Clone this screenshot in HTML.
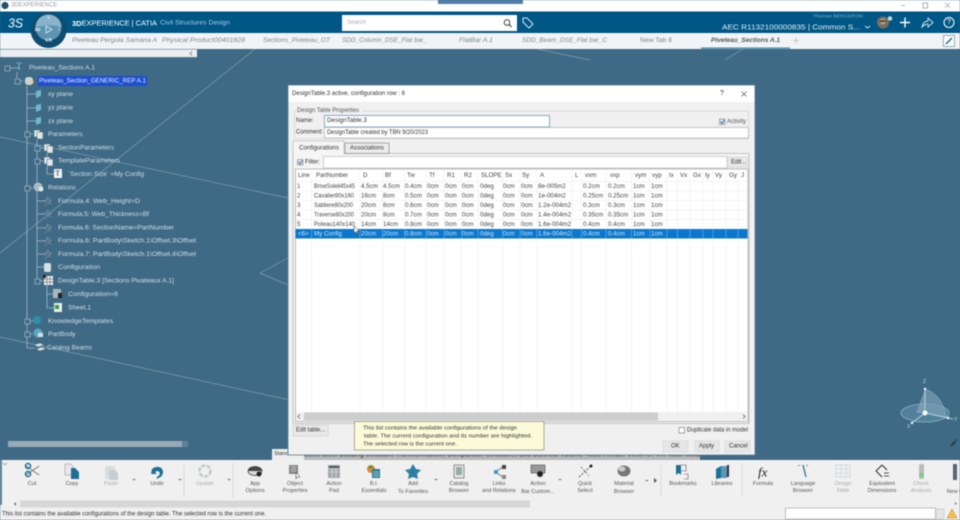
<!DOCTYPE html>
<html><head><meta charset="utf-8"><title>3DEXPERIENCE</title>
<style>
html,body{margin:0;padding:0;width:960px;height:520px;overflow:hidden;background:#3f6a85}
svg{display:block;filter:blur(.4px)}
text{font-family:"Liberation Sans",sans-serif;font-size:6.3px;dominant-baseline:central;fill:#333}
.t text{fill:#d3dee5;font-size:6.7px}
.tab text{fill:#7c858b;font-style:italic;font-size:6.8px}
.c text{text-anchor:middle;fill:#555;font-size:5.5px}
.g text{text-anchor:middle;fill:#aaa;font-size:5.5px}
.h text{fill:#444;font-size:6.2px}
.s text{fill:#cfe4f7;font-size:6.2px}
.fx text{font-family:"Liberation Serif",serif;font-style:italic;font-size:9px;fill:#14232c;stroke:#b9c7d0;stroke-width:.25}
.l{stroke:#a5bac8;stroke-width:.8;fill:none}
.v{stroke:#7f9fb4;stroke-width:.7;fill:none}
.gl{stroke:#efefef;stroke-width:.7}
</style></head><body>
<svg width="960" height="520" viewBox="0 0 960 520" xmlns="http://www.w3.org/2000/svg">
<rect width="960" height="520" fill="#3f6a85"/>
<!-- viewport lines -->
<path class="v" d="M0 253L255 49M0 137L288 198M0 337L290 400M537 49L590 60M743 49L725 60M260 273L288 258M260 273L288 285"/>
<!-- title bar -->
<rect width="960" height="12" fill="#fff"/>
<rect x="438" y="0" width="85" height="4" fill="#4f80ab"/>
<circle cx="5" cy="5.500" r="3.600" fill="#24506e"/>
<text x="11" y="5.500" style="font-size:6px;fill:#9a9a9a">3DEXPERIENCE</text>
<path d="M901 5.500h4" stroke="#aaa" stroke-width=".8"/><rect x="923" y="3" width="4.500" height="5" fill="none" stroke="#999" stroke-width=".8"/>
<path d="M945 3l5 5M950 3l-5 5" stroke="#aaa" stroke-width=".8"/>
<!-- header -->
<rect y="11.500" width="960" height="21.500" fill="#005685"/>
<text x="8" y="23" style="font-size:13px;font-style:italic;fill:#fff" textLength="15" lengthAdjust="spacingAndGlyphs">3S</text>
<text x="72" y="23" style="font-size:7.600px;fill:#fff" textLength="85" lengthAdjust="spacingAndGlyphs"><tspan font-weight="bold">3D</tspan>EXPERIENCE | CATIA</text>
<text x="160" y="23" style="font-size:6.300px;fill:#a9cde0" textLength="70" lengthAdjust="spacingAndGlyphs">Civil Structures Design</text>
<rect x="342" y="15" width="175" height="16" fill="#fff"/>
<text x="347" y="23" style="font-size:6px;fill:#aaa">Search</text>
<circle cx="507" cy="22.500" r="2.800" fill="none" stroke="#444" stroke-width="1"/><path d="M509 24.500l2.500 2.500" stroke="#444" stroke-width="1.200"/>
<path d="M523 18h4l6 6-4 4-6-6z" fill="none" stroke="#d5e8f2" stroke-width="1"/>
<text x="813" y="17" style="font-size:4.800px;fill:#7fb3cf" textLength="50" lengthAdjust="spacingAndGlyphs">Thomas BERGERON</text>
<text x="722" y="27" style="font-size:7.600px;fill:#e3eff5" textLength="138" lengthAdjust="spacingAndGlyphs">AEC R1132100000835 | Common S...</text>
<path d="M865 26l2.500 2 2.500-2" fill="none" stroke="#d5e8f2" stroke-width=".9"/>
<circle cx="883" cy="22.500" r="6" fill="#77705f"/><circle cx="883" cy="21.500" r="3" fill="#c09a7a"/><rect x="880" y="20.500" width="6" height="1.300" fill="#333"/><circle cx="890" cy="18.500" r="2.300" fill="#c4d3dc"/>
<path d="M905 17.500v10M900 22.500h10" stroke="#fff" stroke-width="1.400"/>
<path d="M922 27c1-4 3-6 6-6v-3l5 4.500-5 4.500v-3c-2 0-4 1-6 3z" fill="none" stroke="#d5e8f2" stroke-width=".9"/>
<circle cx="949" cy="22.500" r="5" fill="none" stroke="#fff" stroke-width="1"/><text x="949" y="22.500" style="font-size:7px;fill:#fff;text-anchor:middle">?</text>
<!-- tabs row -->
<rect y="33" width="960" height="16" fill="#f1f4f6"/>
<g class="tab">
<text x="72" y="40.500" textLength="85" lengthAdjust="spacingAndGlyphs">Piveteau Pergola Samana A</text>
<text x="162" y="40.500" textLength="83" lengthAdjust="spacingAndGlyphs">Physical Product00401828</text>
<text x="263" y="40.500" textLength="67" lengthAdjust="spacingAndGlyphs">Sections_Piveteau_OT</text>
<text x="342" y="40.500" textLength="85" lengthAdjust="spacingAndGlyphs">SDD_Column_DSE_Flat bar_</text>
<text x="459" y="40.500" textLength="34" lengthAdjust="spacingAndGlyphs">FlatBar A.1</text>
<text x="522" y="40.500" textLength="85" lengthAdjust="spacingAndGlyphs">SDD_Beam_DSE_Flat bar_C</text>
<text x="640" y="40.500" textLength="32" lengthAdjust="spacingAndGlyphs" style="font-style:normal">New Tab 8</text>
<text x="711" y="40.500" textLength="69" lengthAdjust="spacingAndGlyphs" style="font-weight:bold;fill:#555">Piveteau_Sections A.1</text>
</g>
<path d="M793 40.500h6M796 37.500v6" stroke="#bbb" stroke-width=".8"/>
<rect x="701" y="47.500" width="89" height="1.200" fill="#3a7ea3"/>
<rect x="943.500" y="35.500" width="11" height="11" fill="#fff" stroke="#6c8794" stroke-width=".7"/>
<path d="M946 44l3-3M952 38l-3 3" stroke="#1f6e96" stroke-width="1.500"/>
<!-- compass -->
<circle cx="48.500" cy="30" r="18" fill="#0f4c70"/>
<circle cx="48.500" cy="27.500" r="13" fill="#5d94b2"/>
<path d="M35.500 27.500a13 13 0 0 1 26 0c-6-3-20-3-26 0z" fill="#88b4ca"/>
<path d="M46 26l6 3.500-6 3.500z" fill="none" stroke="#dcebf3" stroke-width=".8"/>
<text x="48.500" y="18" style="font-size:4.500px;fill:#e6f1f6;text-anchor:middle">✕</text>
<text x="37.500" y="29.500" style="font-size:4.500px;fill:#fff;text-anchor:middle;font-weight:bold">3D</text>
<text x="59" y="29.500" style="font-size:4.500px;fill:#fff;text-anchor:middle">i</text>
<text x="48.500" y="40" style="font-size:4.500px;fill:#fff;text-anchor:middle;font-weight:bold">V.R</text>
<!-- tree top scrollbar -->
<rect y="49.500" width="197" height="7.500" fill="#eceeef"/>
<path d="M192 51.500l-2 2 2 2" fill="none" stroke="#666" stroke-width=".7"/>
<rect y="57" width="197" height="1" fill="#577b93"/>
<!-- tree lines -->
<path class="l" d="M17 72V78M27 86V348M37 140V280M47 153V174M47 285V308M7 68h12M17 81h6M27 94h10M27 108h10M27 121h10M27 134h6M37 148h8M37 161h8M47 174h8M27 188h6M37 201h10M37 214h10M37 228h10M37 241h10M37 254h10M37 267h10M37 281h8M47 294h8M47 308h8M27 321h6M27 334h6M27 348h8"/>
<!-- expanders -->
<g fill="#3f6a85" stroke="#a5bac8" stroke-width=".7">
<rect x="5" y="66" width="5" height="5"/><rect x="15" y="79" width="5" height="5"/><rect x="25" y="132" width="5" height="5"/><rect x="35" y="146" width="5" height="5"/><rect x="35" y="159" width="5" height="5"/><rect x="25" y="186" width="5" height="5"/><rect x="35" y="279" width="5" height="5"/><rect x="25" y="319" width="5" height="5"/><rect x="25" y="332" width="5" height="5"/>
</g>
<!-- tree icons -->
<text x="16" y="67" style="font-size:10px;fill:#7ec4e0;font-family:'Liberation Serif',serif">T</text>
<rect x="25" y="77" width="8" height="8" rx="3" fill="#c9d5dc"/><circle cx="31" cy="82" r="2.500" fill="#e8c8a8"/>
<path d="M36 91l5-1v6l-5 2zM36 105l5-1v6l-5 2zM36 118l5-1v6l-5 2z" fill="#6fb8cf"/>
<g fill="#dfe6ea" stroke="#33505f" stroke-width=".4"><rect x="34" y="130" width="6" height="7"/><rect x="37" y="132" width="6" height="7"/><rect x="44" y="144" width="6" height="7"/><rect x="47" y="146" width="6" height="7"/><rect x="44" y="157" width="6" height="7"/><rect x="47" y="159" width="6" height="7"/></g>
<rect x="54" y="169" width="8" height="9" fill="#eef1f3"/><text x="55.500" y="173.500" style="font-size:7px;fill:#222;font-family:'Liberation Serif',serif">T</text>
<circle cx="38" cy="187" r="4.500" fill="#aab9c2"/><circle cx="41" cy="189" r="2.500" fill="#dfe6ea"/>
<g class="fx"><text x="45" y="201">fx</text><text x="45" y="214">fx</text><text x="45" y="228">fx</text><text x="45" y="241">fx</text><text x="45" y="254">fx</text></g>
<rect x="44" y="263" width="7" height="9" rx="2" fill="#d9e0e4"/>
<rect x="44" y="276" width="9" height="9" fill="#eef1f3"/><path d="M44 279h9M44 282h9M47 276v9M50 276v9" stroke="#445" stroke-width=".5"/><rect x="43" y="275" width="3" height="3" fill="#222"/>
<rect x="53" y="289" width="8" height="9" fill="#aab7be"/><rect x="58" y="293" width="4" height="5" fill="#222"/>
<rect x="54" y="303" width="8" height="9" fill="#e6ede6"/><rect x="55" y="305" width="4" height="4" fill="#3b9a46"/>
<circle cx="37" cy="320" r="4" fill="#2f90a6"/><circle cx="38" cy="333" r="4.500" fill="#5aa7c4"/><rect x="38" y="333" width="5" height="4" fill="#d7e0e5"/>
<path d="M34 345l6-2 4 2-6 2zM36 349l6-2 4 2-6 2z" fill="#d7dde1" stroke="#33505f" stroke-width=".3"/>
<!-- tree text -->
<rect x="38" y="76" width="109" height="10" fill="#1d4fd0"/>
<g class="t">
<text x="29" y="68" textLength="66" lengthAdjust="spacingAndGlyphs">Piveteau_Sections A.1</text>
<text x="39" y="81" textLength="107" lengthAdjust="spacingAndGlyphs" style="fill:#e6ecff">Piveteau_Section_GENERIC_REP A.1</text>
<text x="48" y="94.500">xy plane</text>
<text x="48" y="108">yz plane</text>
<text x="48" y="121.500">zx plane</text>
<text x="48" y="134.500">Parameters</text>
<text x="58" y="148" textLength="56" lengthAdjust="spacingAndGlyphs">SectionParameters</text>
<text x="58" y="161" textLength="62" lengthAdjust="spacingAndGlyphs">TemplateParameters</text>
<text x="68" y="174.500" textLength="76" lengthAdjust="spacingAndGlyphs">`Section Size` =My Config</text>
<text x="48" y="188">Relations</text>
<text x="58" y="201.500" textLength="82" lengthAdjust="spacingAndGlyphs">Formula.4: Web_Height=D</text>
<text x="58" y="214.500" textLength="91" lengthAdjust="spacingAndGlyphs">Formula.5: Web_Thickness=Bf</text>
<text x="58" y="228" textLength="116" lengthAdjust="spacingAndGlyphs">Formula.6: SectionName=PartNumber</text>
<text x="58" y="241" textLength="138" lengthAdjust="spacingAndGlyphs">Formula.6: PartBody\Sketch.1\Offset.3\Offset</text>
<text x="58" y="254.500" textLength="138" lengthAdjust="spacingAndGlyphs">Formula.7: PartBody\Sketch.1\Offset.4\Offset</text>
<text x="58" y="267.500" textLength="42" lengthAdjust="spacingAndGlyphs">Configuration</text>
<text x="58" y="281" textLength="116" lengthAdjust="spacingAndGlyphs">DesignTable.3 [Sections Pivateaux A.1]</text>
<text x="68" y="294.500" textLength="50" lengthAdjust="spacingAndGlyphs">Configuration=6</text>
<text x="68" y="308">Sheet.1</text>
<text x="48" y="321.500" textLength="65" lengthAdjust="spacingAndGlyphs">KnowledgeTemplates</text>
<text x="48" y="334.500">PartBody</text>
<text x="47" y="348" textLength="45" lengthAdjust="spacingAndGlyphs">Catalog Beams</text>
</g>
<rect x="8" y="441" width="174" height="6" fill="#97aab6"/>
<rect x="182" y="441" width="6" height="6" fill="#5c8198"/>
<!-- triad -->
<g>
<ellipse cx="925" cy="413" rx="24" ry="9" fill="#5c8aa5" fill-opacity=".7" stroke="#8fb6cc" stroke-width=".7"/>
<path d="M925 389c12 4 19 14 21 28l-21-4z" fill="#7a9fb5" fill-opacity=".7" stroke="#9cc0d4" stroke-width=".5"/>
<path d="M925 389l-9 24 9 0z" fill="#86a8bb" fill-opacity=".7"/>
<path d="M925 389v24M925 413l28 6M925 413l-13 10" stroke="#b5cfdd" stroke-width="1"/>
<circle cx="925" cy="413" r="2.500" fill="#fff"/><circle cx="925" cy="389" r="1.200" fill="#fff"/><circle cx="948" cy="418" r="1.200" fill="#fff"/><circle cx="912" cy="423" r="1.200" fill="#fff"/>
<text x="923" y="382" style="font-size:5px;fill:#bcd6e4">Z</text><text x="954" y="420" style="font-size:5px;fill:#bcd6e4">Y</text><text x="907" y="427" style="font-size:5px;fill:#bcd6e4">X</text>
<path d="M958 438l-6 5-2 4 4-2z" fill="#2b3d49"/>
</g>
<!-- ribbon tabs strip -->
<rect x="272" y="449" width="428" height="11" fill="#b8b8b8"/>
<rect x="272" y="449" width="32" height="11" fill="#eee"/>
<text x="274" y="454" style="font-size:5.500px">Standard</text>
<text x="304" y="455.500" style="font-size:6px;fill:#333" textLength="396" lengthAdjust="spacingAndGlyphs">Steel  Steel Building  Structure  Transformations  Comparison  Structures and Connect  Volume  Tools  Render  View  AR-VR  Tools  Mold</text>
<!-- toolbar -->
<rect y="460" width="960" height="60" fill="#f0f0f0"/>
<rect y="460" width="2" height="45" fill="#6a8aa0"/>
<path d="M3 463l2 2 2-2" fill="none" stroke="#888" stroke-width=".7"/>
<rect x="20" y="500.500" width="510" height="7" fill="#d7d7d7"/>
<path d="M16 502l-2 2 2 2" fill="#666"/>
<path d="M184 465v32M233 463v35M661 464v33M742 464v33" stroke="#d0d0d0" stroke-width=".7"/>
<g class="c">
<text x="32" y="484">Cut</text><text x="72" y="484">Copy</text><text x="157" y="484">Undo</text>
<text x="255" y="484">App</text><text x="255" y="491">Options</text>
<text x="295" y="484">Object</text><text x="295" y="491">Properties</text>
<text x="334" y="484">Action</text><text x="334" y="491">Pad</text>
<text x="374" y="484">B.I.</text><text x="374" y="491">Essentials</text>
<text x="413" y="484">Add</text><text x="413" y="492">To Favorites</text>
<text x="459" y="484">Catalog</text><text x="459" y="491">Browser</text>
<text x="499" y="484">Links</text><text x="499" y="491">and Relations</text>
<text x="538" y="484">Action</text><text x="538" y="492">Bar Custom...</text>
<text x="585" y="484">Quick</text><text x="585" y="491">Select</text>
<text x="624" y="484">Material</text><text x="624" y="492">Browser</text>
<text x="683" y="484">Bookmarks</text><text x="722" y="484">Libraries</text>
<text x="763" y="484">Formula</text>
<text x="803" y="484">Language</text><text x="803" y="491">Browser</text>
<text x="882" y="484">Equivalent</text><text x="882" y="491">Dimensions</text>
<text x="955" y="492">New C</text>
</g>
<g class="g">
<text x="111" y="484">Paste</text><text x="205" y="484">Update</text>
<text x="843" y="484">Design</text><text x="843" y="491">Table</text>
<text x="921" y="484">Check</text><text x="921" y="491">Analysis</text>
</g>
<!-- toolbar icons -->
<path d="M26 466l13 9M39 466l-13 9" stroke="#777" stroke-width="1"/><circle cx="28" cy="466" r="2.500" fill="none" stroke="#1f6e96" stroke-width="1.500"/><circle cx="28" cy="474" r="2.500" fill="none" stroke="#1f6e96" stroke-width="1.500"/>
<path d="M65 464h6l3 4v7H65z" fill="#e8e8e8" stroke="#888" stroke-width=".5"/><path d="M71 468h4l4 4v7h-8z" fill="#1f6e96"/>
<path d="M105 466h10v13h-10z" fill="#d8dde0"/><path d="M109 470h6l3 3v7h-9z" fill="#c5cfd4"/>
<path d="M152 469c5-4 11-2 11 3 0 4-3 6-7 7l2-3c3-1 2-5-1-5l-2 1 2 2h-6z" fill="#1f7096"/>
<circle cx="205" cy="471" r="5.500" fill="none" stroke="#c0c8cc" stroke-width="2.500" stroke-dasharray="4 1.500"/>
<ellipse cx="255" cy="471" rx="7" ry="4.500" fill="#d8d8d8" stroke="#333" stroke-width=".7"/><path d="M248 471c0-6 14-6 14 0z" fill="#444"/><circle cx="259" cy="474" r="2.500" fill="#222"/>
<rect x="289" y="465" width="9" height="9" fill="#888"/><path d="M291 467h5M291 469h5M291 471h5" stroke="#eee" stroke-width=".6"/><path d="M296 472l4 5-3 0-1 2z" fill="#fff" stroke="#333" stroke-width=".5"/>
<rect x="328" y="465" width="12" height="13" fill="#a0a8ab"/><path d="M329 469h10M329 472h10M332 466v11M336 466v11" stroke="#eee" stroke-width=".6"/><rect x="329" y="466" width="10" height="2" fill="#4a5a62"/>
<circle cx="371" cy="469" r="4" fill="#d68a33"/><rect x="372" y="469" width="8" height="9" fill="#2a7e95"/><path d="M373 472h6M373 474h6M373 476h6" stroke="#fff" stroke-width=".5"/><path d="M368 468l3-3 2 3z" fill="#3a9a4a"/>
<path d="M413 464l3 5 5 1-4 4 1 5-5-2-5 2 1-5-4-4 5-1z" fill="#2e7ea3"/>
<rect x="454" y="465" width="10" height="13" fill="#e6e6e6" stroke="#555" stroke-width=".6"/><rect x="456" y="467" width="6" height="8" fill="#9aa"/>
<path d="M495 472l8-5M495 472l8 5" stroke="#333" stroke-width=".6"/><rect x="494" y="470" width="4" height="4" fill="#39a0c0"/><rect x="502" y="465" width="4" height="4" fill="#444"/><rect x="502" y="475" width="4" height="4" fill="#888"/>
<rect x="531" y="465" width="14" height="8" fill="#999" stroke="#333" stroke-width=".5"/><circle cx="540" cy="474" r="3" fill="#222"/>
<path d="M579 477l12-11" stroke="#555" stroke-dasharray="2 1.500" stroke-width="1"/><path d="M581 467l8 9" stroke="#888" stroke-dasharray="2 1.500"/><circle cx="591" cy="466" r="1.500" fill="#222"/>
<ellipse cx="624" cy="471" rx="6.500" ry="5.500" fill="#777"/><ellipse cx="622" cy="469" rx="3.500" ry="2.500" fill="#ccc"/>
<path d="M676 465h5v10l-2.500-2-2.500 2z" fill="#1f6e96"/><path d="M681 465h5v6h-5M684 474h4v5h-4" fill="none" stroke="#555" stroke-width=".6"/>
<path d="M716 469l5-3v12l-5 1z" fill="#1f7096"/><path d="M721 466h6v12h-6z" fill="#5a98b6"/><path d="M727 465h2v12h-2z" fill="#333"/>
<text x="758" y="472" style="font-size:13px;font-style:italic;fill:#222;font-family:'Liberation Serif',serif">fx</text>
<path d="M803 465l3 12" stroke="#1f7096" stroke-width="1.200"/><path d="M798 466l2-1M806 466l2-1" stroke="#555" stroke-width=".6"/>
<rect x="836" y="465" width="14" height="12" fill="#eef1f3" stroke="#c3cbd0" stroke-width=".6"/><path d="M836 469h14M836 473h14M841 465v12M846 465v12" stroke="#c3cbd0" stroke-width=".5"/>
<path d="M882 465l-6 6 6 6M882 465l5 5" fill="none" stroke="#222" stroke-width=".9"/><path d="M884 473h5M884 476h5" stroke="#222" stroke-width=".8"/>
<rect x="919" y="464" width="5" height="15" rx="1.500" fill="#bbb"/><circle cx="921.500" cy="475" r="2" fill="#6fd36f"/>
<rect x="953" y="464" width="4" height="16" fill="#567"/>
<path d="M132 479l2 1.500 2-1.500z M178 479l2 1.500 2-1.500z M227 479l2 1.500 2-1.500z M434 479l2 1.500 2-1.500z M558 479l2 1.500 2-1.500z M645 480l2 1.500 2-1.500z" fill="#777"/>
<path d="M654 478l3 2.500-3 2.500z" fill="#555"/>
<path d="M955 502l2 1.500-2 1.500z" fill="#777"/>
<!-- status bar -->
<text x="2" y="514" style="font-size:6.100px;fill:#333" textLength="264" lengthAdjust="spacingAndGlyphs">This list contains the available configurations of the design table. The selected row is the current one.</text>
<rect x="785.500" y="508" width="150" height="11" fill="#fff" stroke="#999" stroke-width=".6"/>
<rect x="936" y="509" width="8" height="10" fill="#e5e5e5" stroke="#bbb" stroke-width=".5"/>
<path d="M952 509l5 9h-10z" fill="#f3c04a" stroke="#b8862a" stroke-width=".5"/>
<!-- DIALOG -->
<rect x="288" y="85" width="467" height="370" fill="#f0f0f0" stroke="#5a7a90" stroke-width=".8"/>
<rect x="288.500" y="85.500" width="466" height="16.500" fill="#fff"/>
<text x="292" y="93.500" style="font-size:6.300px" textLength="113" lengthAdjust="spacingAndGlyphs">DesignTable.3 active, configuration row : 6</text>
<text x="720" y="93.500" style="font-size:7px">?</text>
<path d="M741.500 91.500l5 5M746.500 91.500l-5 5" stroke="#666" stroke-width=".8"/>
<rect x="294.500" y="111" width="454" height="28" fill="none" stroke="#d5d5d5" stroke-width=".8" rx="1"/>
<rect x="296" y="107" width="66" height="7" fill="#f0f0f0"/>
<text x="297" y="110.500" style="font-size:6.100px;fill:#555" textLength="62" lengthAdjust="spacingAndGlyphs">Design Table Properties</text>
<text x="296" y="121" style="font-size:6px">Name:</text>
<rect x="324.500" y="115.500" width="225" height="11.500" fill="#fff" stroke="#4a88b4" stroke-width=".7"/>
<text x="327" y="120.500">DesignTable.3</text>
<text x="296" y="132.500" style="font-size:6px" textLength="27" lengthAdjust="spacingAndGlyphs">Comment:</text>
<rect x="324.500" y="127.500" width="424" height="10.500" fill="#fff" stroke="#b0b0b0" stroke-width=".7"/>
<text x="327" y="132.500" textLength="101" lengthAdjust="spacingAndGlyphs">DesignTable created by TBN 9/20/2023</text>
<rect x="719.500" y="119" width="5.500" height="5.500" fill="#d8e6f0" stroke="#667" stroke-width=".5"/><path d="M720.500 121.500l1.500 2 2.500-3.500" fill="none" stroke="#2a5a80" stroke-width=".8"/>
<text x="727" y="122" style="font-size:6px;fill:#555">Activity</text>
<!-- tabs -->
<rect x="293" y="153.500" width="456" height="270" fill="#f5f5f5" stroke="#b0b0b0" stroke-width=".7"/>
<rect x="293" y="141" width="51" height="13" fill="#f5f5f5" stroke="#b0b0b0" stroke-width=".6"/><rect x="293.500" y="152.500" width="50" height="2" fill="#f5f5f5"/>
<rect x="345" y="143" width="44" height="10.500" fill="#ececec" stroke="#777" stroke-width=".6"/>
<text x="299" y="148.500" style="font-size:6px" textLength="40" lengthAdjust="spacingAndGlyphs">Configurations</text>
<text x="350" y="148.500" style="font-size:6px" textLength="34" lengthAdjust="spacingAndGlyphs">Associations</text>
<rect x="297.500" y="159.500" width="5.500" height="5.500" fill="#d8e6f0" stroke="#667" stroke-width=".5"/><path d="M298.500 162l1.500 2 2.500-3.500" fill="none" stroke="#2a5a80" stroke-width=".8"/>
<text x="305" y="162.500" style="font-size:6px">Filter:</text>
<rect x="323.500" y="156.500" width="403.500" height="11.500" fill="#fff" stroke="#b0b0b0" stroke-width=".6"/>
<rect x="727.500" y="157" width="20" height="10.500" fill="#e8e8e8" stroke="#ccc" stroke-width=".6"/>
<text x="731" y="162.500" style="font-size:6px">Edit...</text>
<!-- table -->
<rect x="295.500" y="169" width="452.500" height="252.500" fill="#fff" stroke="#a0a0a0" stroke-width=".7"/>
<g class="gl">
<path d="M311.500 170V412M360 170V412M382.500 170V412M404.500 170V412M426 170V412M444 170V412M461.500 170V412M478 170V412M502.500 170V412M520 170V412M537 170V412M572 170V412M581.500 170V412M606 170V412M631.500 170V412M650 170V412M667 170V412M677.500 170V412M690 170V412M703 170V412M713 170V412M726 170V412M738 170V412M296 181.500H747M296 191H747M296 200.500H747M296 210H747M296 219.500H747M296 229H747"/>
</g>
<g class="h">
<text x="298" y="175.500">Line</text><text x="316" y="175.500" textLength="32" lengthAdjust="spacingAndGlyphs">PartNumber</text><text x="363" y="175.500">D</text><text x="385" y="175.500">Bf</text><text x="407" y="175.500">Tw</text><text x="429" y="175.500">Tf</text><text x="447" y="175.500">R1</text><text x="464" y="175.500">R2</text><text x="481" y="175.500">SLOPE</text><text x="505" y="175.500">Sx</text><text x="522" y="175.500">Sy</text><text x="540" y="175.500">A</text><text x="575" y="175.500">L</text><text x="585" y="175.500">vxm</text><text x="610" y="175.500">vxp</text><text x="635" y="175.500">vym</text><text x="652" y="175.500">vyp</text><text x="669" y="175.500">Ix</text><text x="680" y="175.500">Vx</text><text x="693" y="175.500">Gx</text><text x="705" y="175.500">Iy</text><text x="715" y="175.500">Vy</text><text x="729" y="175.500">Gy</text><text x="741" y="175.500">J</text>
<text x="297" y="186.500">1</text><text x="314" y="186.500" textLength="41" lengthAdjust="spacingAndGlyphs">BriseSoleil45x45</text><text x="361" y="186.500">4.5cm</text><text x="383" y="186.500">4.5cm</text><text x="405" y="186.500">0.4cm</text><text x="427" y="186.500">0cm</text><text x="445" y="186.500">0cm</text><text x="462" y="186.500">0cm</text><text x="480" y="186.500">0deg</text><text x="503" y="186.500">0cm</text><text x="521" y="186.500">0cm</text><text x="538" y="186.500">8e-005m2</text><text x="583" y="186.500">0.2cm</text><text x="608" y="186.500">0.2cm</text><text x="633" y="186.500">1cm</text><text x="651" y="186.500">1cm</text>
<text x="297" y="196">2</text><text x="314" y="196" textLength="40" lengthAdjust="spacingAndGlyphs">Cavalier80x160</text><text x="361" y="196">16cm</text><text x="383" y="196">8cm</text><text x="405" y="196">0.5cm</text><text x="427" y="196">0cm</text><text x="445" y="196">0cm</text><text x="462" y="196">0cm</text><text x="480" y="196">0deg</text><text x="503" y="196">0cm</text><text x="521" y="196">0cm</text><text x="538" y="196">1e-004m2</text><text x="583" y="196">0.25cm</text><text x="608" y="196">0.25cm</text><text x="633" y="196">1cm</text><text x="651" y="196">1cm</text>
<text x="297" y="205.500">3</text><text x="314" y="205.500" textLength="39" lengthAdjust="spacingAndGlyphs">Sabliere80x200</text><text x="361" y="205.500">20cm</text><text x="383" y="205.500">8cm</text><text x="405" y="205.500">0.6cm</text><text x="427" y="205.500">0cm</text><text x="445" y="205.500">0cm</text><text x="462" y="205.500">0cm</text><text x="480" y="205.500">0deg</text><text x="503" y="205.500">0cm</text><text x="521" y="205.500">0cm</text><text x="538" y="205.500">1.2e-004m2</text><text x="583" y="205.500">0.3cm</text><text x="608" y="205.500">0.3cm</text><text x="633" y="205.500">1cm</text><text x="651" y="205.500">1cm</text>
<text x="297" y="215">4</text><text x="314" y="215" textLength="40" lengthAdjust="spacingAndGlyphs">Traverse80x200</text><text x="361" y="215">20cm</text><text x="383" y="215">8cm</text><text x="405" y="215">0.7cm</text><text x="427" y="215">0cm</text><text x="445" y="215">0cm</text><text x="462" y="215">0cm</text><text x="480" y="215">0deg</text><text x="503" y="215">0cm</text><text x="521" y="215">0cm</text><text x="538" y="215">1.4e-004m2</text><text x="583" y="215">0.35cm</text><text x="608" y="215">0.35cm</text><text x="633" y="215">1cm</text><text x="651" y="215">1cm</text>
<text x="297" y="224.500">5</text><text x="314" y="224.500" textLength="41" lengthAdjust="spacingAndGlyphs">Poteau140x140</text><text x="361" y="224.500">14cm</text><text x="383" y="224.500">14cm</text><text x="405" y="224.500">0.8cm</text><text x="427" y="224.500">0cm</text><text x="445" y="224.500">0cm</text><text x="462" y="224.500">0cm</text><text x="480" y="224.500">0deg</text><text x="503" y="224.500">0cm</text><text x="521" y="224.500">0cm</text><text x="538" y="224.500">1.6e-004m2</text><text x="583" y="224.500">0.4cm</text><text x="608" y="224.500">0.4cm</text><text x="633" y="224.500">1cm</text><text x="651" y="224.500">1cm</text>
</g>
<rect x="295.500" y="229" width="452" height="9.500" fill="#0a78cf"/>
<path d="M311.500 229v9.500M360 229v9.500M382.500 229v9.500M404.500 229v9.500M426 229v9.500M444 229v9.500M461.500 229v9.500M478 229v9.500M502.500 229v9.500M520 229v9.500M537 229v9.500M572 229v9.500M581.500 229v9.500M606 229v9.500M631.500 229v9.500M650 229v9.500M667 229v9.500M677.500 229v9.500M690 229v9.500M703 229v9.500M713 229v9.500M726 229v9.500M738 229v9.500" stroke="#6fb2e4" stroke-width=".6"/>
<g class="s">
<text x="298" y="234">&lt;6&gt;</text><text x="314" y="234">My Config</text><text x="361" y="234">20cm</text><text x="383" y="234">20cm</text><text x="405" y="234">0.8cm</text><text x="427" y="234">0cm</text><text x="445" y="234">0cm</text><text x="462" y="234">0cm</text><text x="480" y="234">0deg</text><text x="503" y="234">0cm</text><text x="521" y="234">0cm</text><text x="538" y="234">1.6e-004m2</text><text x="583" y="234">0.4cm</text><text x="608" y="234">0.4cm</text><text x="633" y="234">1cm</text><text x="651" y="234">1cm</text>
</g>
<path d="M354 226l0 7 2-1.500 1 2.500 1-.5-1-2.500h2.500z" fill="#fff" stroke="#333" stroke-width=".5"/>
<!-- table scrollbar -->
<rect x="296" y="412" width="451" height="8.500" fill="#f0f0f0"/>
<rect x="304" y="412.500" width="354" height="8" fill="#cdcdcd"/>
<path d="M300 414.500l-2 2 2 2M743 414.500l2 2-2 2" fill="none" stroke="#555" stroke-width=".7"/>
<!-- bottom dialog controls -->
<rect x="293" y="425" width="35" height="11" fill="#e8e8e8" stroke="#ccc" stroke-width=".6"/>
<text x="296" y="430.500" style="font-size:6px" textLength="29" lengthAdjust="spacingAndGlyphs">Edit table...</text>
<rect x="679" y="427.500" width="5.500" height="5.500" fill="#fff" stroke="#555" stroke-width=".5"/>
<text x="687" y="430.500" style="font-size:6px" textLength="61" lengthAdjust="spacingAndGlyphs">Duplicate data in model</text>
<rect x="663" y="441" width="25" height="11" fill="#e6e6e6" stroke="#d2d2d2" stroke-width=".6"/><text x="671" y="446.500" style="font-size:6px">OK</text>
<rect x="695" y="441" width="24" height="11" fill="#e6e6e6" stroke="#d2d2d2" stroke-width=".6"/><text x="699" y="446.500" style="font-size:6px">Apply</text>
<rect x="725" y="441" width="25" height="11" fill="#e6e6e6" stroke="#d2d2d2" stroke-width=".6"/><text x="729" y="446.500" style="font-size:6px">Cancel</text>
<!-- tooltip -->
<rect x="354.500" y="421.500" width="189.500" height="28.500" fill="#fbfbd9" stroke="#8a8a78" stroke-width=".7"/>
<text x="363" y="428.500" style="font-size:5.900px" textLength="154" lengthAdjust="spacingAndGlyphs">This list contains the available configurations of the design</text>
<text x="364" y="436.500" style="font-size:5.900px" textLength="168" lengthAdjust="spacingAndGlyphs">table. The current configuration and its number are highlighted.</text>
<text x="363" y="444.500" style="font-size:5.900px" textLength="94" lengthAdjust="spacingAndGlyphs">The selected row is the current one.</text>
</svg>
</body></html>
